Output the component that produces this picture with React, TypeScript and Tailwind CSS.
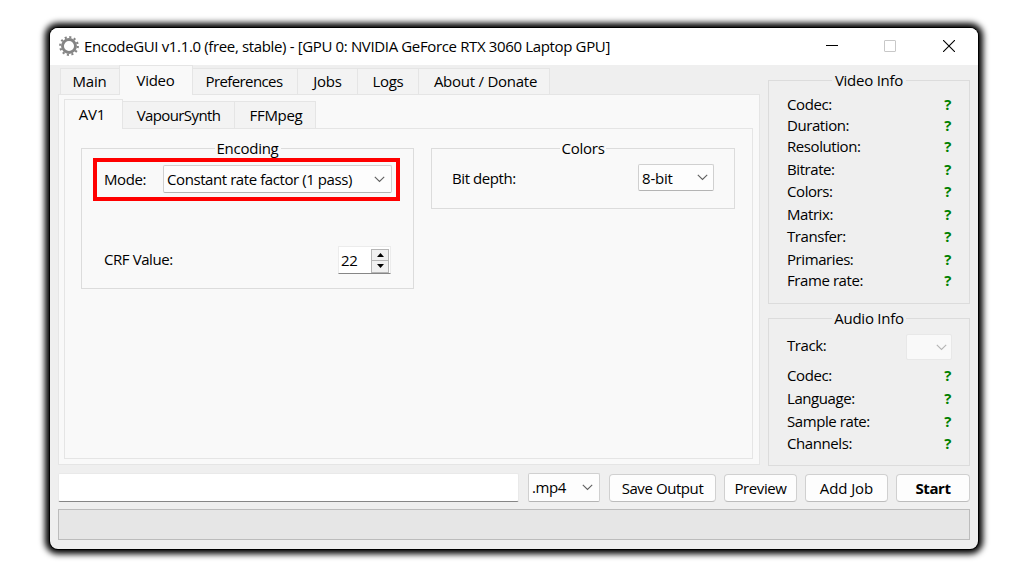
import type { ReactNode } from "react";

function Chevron({ muted = false }: { muted?: boolean }) {
  return (
    <svg width="11" height="7" viewBox="0 0 11 7" fill="none" stroke={muted ? "#b5b5b5" : "#606060"} strokeWidth="1.1">
      <path d="M0.8 0.8 L5.5 5.5 L10.2 0.8" />
    </svg>
  );
}

function Gear() {
  return (
    <svg className="-mt-px" width="20" height="20" viewBox="-10 -10 20 20" fill="none" stroke="#858585">
      <circle r="6.5" strokeWidth="2.9" />
      <circle r="8.8" strokeWidth="2.2" strokeDasharray="2.1 2.507" />
    </svg>
  );
}

function Group({ title, className, legend, children }: { title: string; className: string; legend: string; children?: ReactNode }) {
  return (
    <section className={`border border-[#dcdcdc] ${className}`}>
      <h2 className={`mx-auto -mt-[11px] h-5 text-center leading-5 tracking-[-0.25px] ${legend}`}>{title}</h2>
      {children}
    </section>
  );
}

function Tab({ label, className }: { label: string; className: string }) {
  return <div className={`border-t border-r border-[#e5e5e5] whitespace-nowrap ${className}`}>{label}</div>;
}

function Info({ label, className = "" }: { label: string; className?: string }) {
  return (
    <div className={`flex h-5 items-center justify-between pr-[18px] pl-[18px] leading-5 ${className}`}>
      <span>{label}</span>
      <b className="text-[15px] text-[#008000]">?</b>
    </div>
  );
}

function Button({ label, className }: { label: string; className: string }) {
  return (
    <button className={`mt-px h-7 rounded-[4px] border border-[#d0d0d0] border-b-[#bcbcbc] bg-[#fdfdfd] text-center leading-[27px] whitespace-nowrap ${className}`}>
      {label}
    </button>
  );
}

const combo = "flex items-center justify-between rounded-[2px] border border-[#d0d0d0] border-b-[#b4b4b4] bg-[#fdfdfd] whitespace-nowrap";

export default function App() {
  return (
    <div className="h-[577px] w-[1028px] overflow-hidden bg-white pt-7 pl-[50px] font-['Open_Sans',sans-serif] text-[15px] tracking-[-0.42px] text-black">
      <main className="flex h-[521px] w-[928px] flex-col rounded-[8px] bg-[#efefef] shadow-[0_0_0_1px_#000,0_0_6px_5px_#000]">
        <header className="flex h-[37px] shrink-0 items-center rounded-t-[8px] bg-white pl-[9px]">
          <Gear />
          <h1 className="-mt-[2px] ml-[5px] flex-1 leading-5 tracking-[-0.355px] whitespace-nowrap">
            EncodeGUI v1.1.0 (free, stable) - [GPU 0: NVIDIA GeForce RTX 3060 Laptop GPU]
          </h1>
          <div className="flex items-center gap-[46px] pr-[23px]">
            <svg className="-ml-px mr-px" width="12" height="12"><path d="M0 4.5H12" stroke="#000" /></svg>
            <svg className="-mt-px -ml-px mr-px" width="12" height="12" fill="none"><rect x=".5" y=".5" width="11" height="11" rx=".5" stroke="#c8c8c8" /></svg>
            <svg className="-mt-px" width="12" height="12"><path d="M0 0L12 12M12 0L0 12" stroke="#000" strokeWidth="1.1" /></svg>
          </div>
        </header>

        <div className="flex h-[408px] shrink-0 pl-2">
          <div className="w-[702px]">
            <nav className="flex h-[29px] items-end pl-[2px] text-center">
              <Tab label="Main" className="h-[26px] w-[59px] border-r-0 border-l bg-[#f3f3f3] pr-px leading-[25px] tracking-[-0.25px]" />
              <Tab label="Video" className="z-10 -mb-px h-[30px] w-[74px] border-l bg-[#f9f9f9] pr-px leading-[28px] tracking-[-0.3px]" />
              <Tab label="Preferences" className="h-[26px] w-[105px] bg-[#f3f3f3] pr-[2px] leading-[25px] tracking-[-0.6px]" />
              <Tab label="Jobs" className="h-[26px] w-[60px] bg-[#f3f3f3] leading-[25px] tracking-[-0.2px]" />
              <Tab label="Logs" className="h-[26px] w-[61px] bg-[#f3f3f3] leading-[25px] tracking-[-0.3px]" />
              <Tab label="About / Donate" className="h-[26px] w-[131px] bg-[#f3f3f3] pl-[3px] leading-[25px] tracking-[-0.25px]" />
            </nav>
            <div className="h-[371px] border border-[#e5e5e5] bg-[#f9f9f9] pt-1 pr-[6px] pl-[5px]">
              <nav className="flex h-[29px] items-end text-center">
                <Tab label="AV1" className="z-10 -mb-px h-[30px] w-[59px] border-l bg-[#f9f9f9] pr-[3px] leading-[28px] tracking-[-0.2px]" />
                <Tab label="VapourSynth" className="h-[27px] w-[112px] bg-[#f3f3f3] leading-[27px] tracking-[-0.6px]" />
                <Tab label="FFMpeg" className="h-[27px] w-[81px] bg-[#f3f3f3] pl-[2px] leading-[27px] tracking-[-0.3px]" />
              </nav>
              <div className="flex h-[331px] items-start gap-[17px] border border-[#e5e5e5] bg-[#f9f9f9] pt-[19px] pl-4">
                <Group title="Encoding" className="relative h-[141px] w-[333px]" legend="w-[66px] bg-[#f9f9f9]">
                  <div className="mt-[7px] flex items-center pl-[22px]">
                    <span className="w-[59px]">Mode:</span>
                    <div className={`h-[28px] w-[229px] pr-[6px] pl-[3px] ${combo}`}>
                      Constant rate factor (1 pass)
                      <Chevron />
                    </div>
                  </div>
                  <div className="mt-[53px] flex items-center justify-between pr-[22px] pl-[22px]">
                    <span className="-mt-[2px]">CRF Value:</span>
                    <div className="flex h-[28px] w-[53px] items-center justify-between border border-[#ececec] border-b-[#868686] bg-white pr-px pl-[2px]">
                      <span>22</span>
                      <div className="mt-px flex h-[24px] w-[18px] flex-col border border-[#b5b5b5] bg-[#f0f0f0]">
                        <div className="flex flex-1 items-center justify-center border-b border-[#b5b5b5]">
                          <svg width="7" height="4"><path d="M0 4L3.5 0L7 4Z" /></svg>
                        </div>
                        <div className="flex flex-1 items-center justify-center">
                          <svg width="7" height="4"><path d="M0 0L3.5 4L7 0Z" /></svg>
                        </div>
                      </div>
                    </div>
                  </div>
                  <div className="absolute top-[9px] left-[11px] h-[43px] w-[307px] border-4 border-[#ff0000]" />
                </Group>
                <Group title="Colors" className="h-[61px] w-[304px]" legend="w-[46px] bg-[#f9f9f9]">
                  <div className="mt-[6px] flex items-center justify-between pr-[20px] pl-[20px]">
                    <span className="mt-px">Bit depth:</span>
                    <div className={`h-[27px] w-[76px] pr-[5px] pl-[3px] tracking-[-0.2px] ${combo}`}>
                      <span className="mt-px">8-bit</span>
                      <Chevron />
                    </div>
                  </div>
                </Group>
              </div>
            </div>
          </div>

          <aside className="ml-2 w-[202px] pt-[15px]">
            <Group title="Video Info" className="h-[224px]" legend="w-[74px] bg-[#efefef]">
              <Info label="Codec:" className="mt-[4px]" />
              <Info label="Duration:" className="mt-[1px]" />
              <Info label="Resolution:" className="mt-[1px]" />
              <Info label="Bitrate:" className="mt-[3px]" />
              <Info label="Colors:" className="mt-[2px]" />
              <Info label="Matrix:" className="mt-[3px]" />
              <Info label="Transfer:" className="mt-[2px]" />
              <Info label="Primaries:" className="mt-[3px]" />
              <Info label="Frame rate:" className="mt-[1px]" />
            </Group>
            <Group title="Audio Info" className="mt-[14px] h-[148px]" legend="w-[74px] bg-[#efefef]">
              <div className="mt-[6px] flex h-[26px] items-center justify-between pr-[17px] pl-[18px]">
                <span className="-mt-[3px]">Track:</span>
                <div className="flex h-[26px] w-[46px] items-center justify-end rounded-[2px] border border-[#e8e8e8] bg-[#f9f9f9] pr-[4px]">
                  <Chevron muted />
                </div>
              </div>
              <Info label="Codec:" className="mt-[5px]" />
              <Info label="Language:" className="mt-[3px]" />
              <Info label="Sample rate:" className="mt-[3px]" />
              <Info label="Channels:" className="mt-[2px]" />
            </Group>
          </aside>
        </div>

        <div className="flex h-[29px] shrink-0 pl-2">
          <div className="h-[29px] w-[461px] rounded-[2px] border border-[#e9e9e9] border-b-[#868686] bg-white" />
          <div className={`ml-[9px] h-[29px] w-[72px] pr-[6px] pl-[3px] ${combo}`}>
            .mp4
            <Chevron />
          </div>
          <Button label="Save Output" className="ml-[9px] w-[107px]" />
          <Button label="Preview" className="ml-2 w-[73px]" />
          <Button label="Add Job" className="ml-2 w-[83px] tracking-[-0.1px]" />
          <Button label="Start" className="ml-2 w-[74px] font-bold" />
        </div>
        <div className="mt-[7px] ml-2 h-[31px] w-[912px] border border-[#bcbcbc] bg-[#e6e6e6]" />
      </main>
    </div>
  );
}
